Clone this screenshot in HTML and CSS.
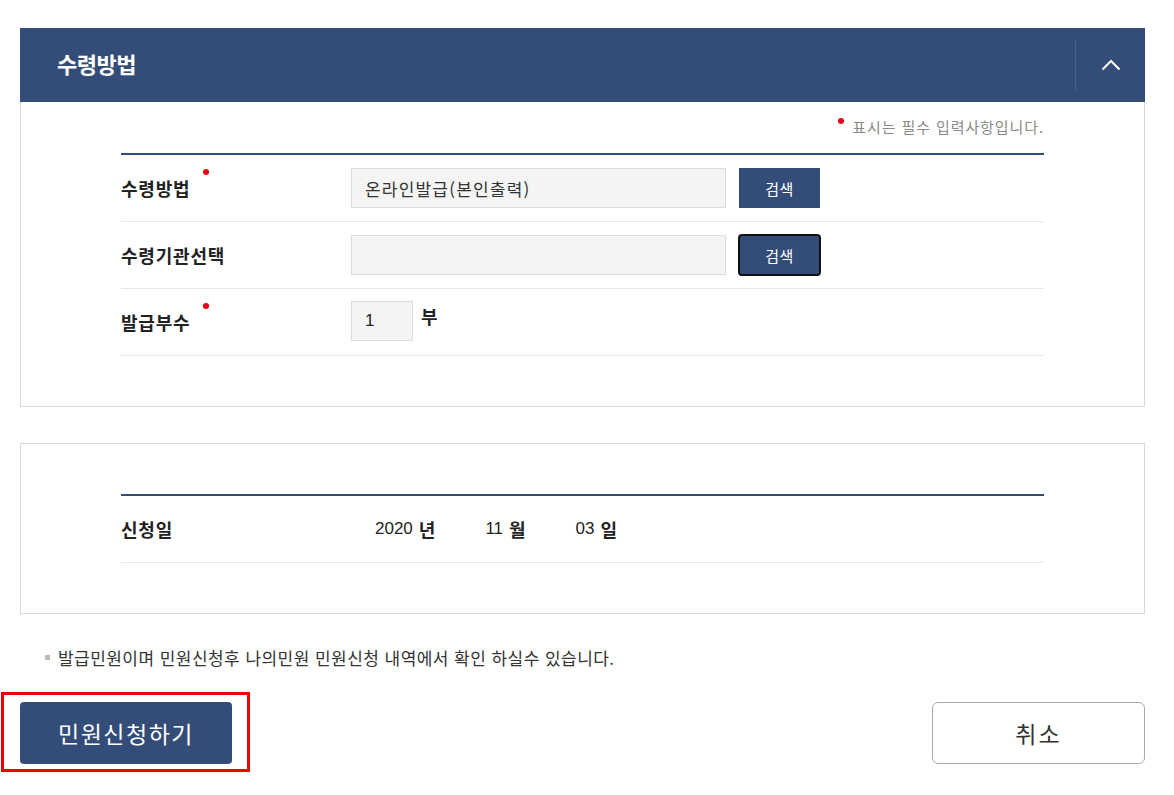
FILE: index.html
```html
<!DOCTYPE html>
<html lang="ko">
<head>
  <meta charset="UTF-8" />
  <meta name="viewport" content="width=device-width, initial-scale=1.0"/>
  <title>수령방법</title>
  <link rel="stylesheet" href="styles.css">
</head>
<body>
  <div class="page">
    <section class="panel">
      <div class="panel-head">
        <h2>수령방법</h2>
        <button class="toggle" type="button" aria-label="접기">
          <svg width="20" height="12" viewBox="0 0 20 12"><path d="M1.5 10.5 L10 2 L18.5 10.5" fill="none" stroke="#fff" stroke-width="2"/></svg>
        </button>
      </div>
      <div class="panel-body">
        <p class="req-note"><span class="dot"></span>표시는 필수 입력사항입니다.</p>
        <div class="form-table">
          <div class="row">
            <div class="label">수령방법<span class="dot"></span></div>
            <div class="field">
              <input class="text-input" type="text" value="온라인발급(본인출력)" readonly>
              <button class="btn-search" type="button">검색</button>
            </div>
          </div>
          <div class="row">
            <div class="label">수령기관선택</div>
            <div class="field">
              <input class="text-input" type="text" value="" readonly>
              <button class="btn-search focused" type="button">검색</button>
            </div>
          </div>
          <div class="row">
            <div class="label">발급부수<span class="dot"></span></div>
            <div class="field top">
              <input class="count-input" type="text" value="1">
              <span class="unit">부</span>
            </div>
          </div>
        </div>
      </div>
    </section>

    <section class="panel plain">
      <div class="form-table">
        <div class="row">
          <div class="label">신청일</div>
          <div class="field date">
            <span class="num">2020</span><span class="unit">년</span>
            <span class="num gap">11</span><span class="unit">월</span>
            <span class="num gap">03</span><span class="unit">일</span>
          </div>
        </div>
      </div>
    </section>

    <p class="info"><span class="bullet"></span>발급민원이며 민원신청후 나의민원 민원신청 내역에서 확인 하실수 있습니다.</p>

    <div class="actions">
      <div class="highlight">
        <button class="btn-submit" type="button">민원신청하기</button>
      </div>
      <button class="btn-cancel" type="button">취소</button>
    </div>
  </div>
</body>
</html>
```

FILE: styles.css
```css
* {
  box-sizing: border-box;
}

body {
  margin: 0;
  background: #fff;
  font-family: "Noto Sans CJK KR", "Noto Sans", sans-serif;
  color: #222;
}

.page {
  width: 1125px;
  margin-left: 20px;
  padding-top: 28px;
}

.panel {
  border: 1px solid #d9d9d9;
}

.panel-head {
  height: 74px;
  margin: -1px -1px 0;
  background: #344d78;
  display: flex;
  align-items: center;
  justify-content: space-between;
  padding-left: 37px;
}

.panel-head h2 {
  margin: 0 0 4px;
  color: #fff;
  font-size: 22px;
  font-weight: 700;
  letter-spacing: -0.5px;
}

.toggle {
  width: 70px;
  height: 50px;
  background: none;
  border: 0;
  border-left: 1px solid #4a6290;
  display: flex;
  align-items: center;
  justify-content: center;
  padding: 0;
}

.panel-body {
  padding: 13px 100px 50px;
}

.req-note {
  margin: 0 0 14px;
  text-align: right;
  font-size: 15px;
  letter-spacing: 0.9px;
  color: #8a8a8a;
  line-height: 24px;
}

.dot {
  display: inline-block;
  width: 6px;
  height: 6px;
  border-radius: 50%;
  background: #e60012;
}

.req-note .dot {
  vertical-align: top;
  margin: 3px 8px 0 0;
}

.label .dot {
  position: relative;
  top: -16px;
  margin-left: 13px;
}

.form-table {
  border-top: 2px solid #344d78;
}

.row {
  display: flex;
  min-height: 67px;
  border-bottom: 1px solid #e6e6e6;
}

.label {
  width: 230px;
  font-size: 18px;
  font-weight: 700;
  color: #222;
  display: flex;
  align-items: center;
  letter-spacing: 0.8px;
}

.field {
  display: flex;
  align-items: center;
  gap: 13px;
}

.field.top {
  align-items: flex-start;
  padding-top: 12px;
  gap: 8px;
}

.text-input {
  width: 375px;
  height: 40px;
  background: #f4f4f4;
  border: 1px solid #dcdcdc;
  font-family: inherit;
  font-size: 17px;
  letter-spacing: 1.2px;
  color: #333;
  padding: 0 13px;
  outline: none;
}

.btn-search {
  width: 81px;
  height: 40px;
  background: #344d78;
  color: #fff;
  border: 0;
  font-family: inherit;
  font-size: 15px;
  letter-spacing: 0.5px;
  cursor: pointer;
}

.btn-search.focused {
  outline: 2px solid #111;
  outline-offset: -1px;
  border-radius: 3px;
}

.count-input {
  width: 62px;
  height: 40px;
  background: #f4f4f4;
  border: 1px solid #dcdcdc;
  font-family: "Liberation Sans", sans-serif;
  font-size: 17px;
  color: #222;
  padding: 0 13px;
  outline: none;
}

.unit {
  font-size: 18px;
  font-weight: 700;
  color: #222;
  line-height: 30px;
}

.panel.plain {
  margin-top: 36px;
  padding: 50px 100px 50px;
}

.field.date {
  gap: 0;
  padding-left: 24px;
}

.num {
  font-family: "Liberation Sans", sans-serif;
  font-size: 17px;
  color: #222;
  margin-right: 6px;
}

.num.gap {
  margin-left: 50px;
}

.info {
  margin: 31px 0 0 25px;
  font-size: 17px;
  color: #333;
  display: flex;
  align-items: center;
  letter-spacing: 0.45px;
}

.bullet {
  width: 5px;
  height: 5px;
  background: #bbb;
  margin-right: 8px;
}

.actions {
  display: flex;
  justify-content: space-between;
  align-items: center;
  margin-top: 22px;
}

.highlight {
  margin-left: -19px;
  border: 3px solid #f20000;
  padding: 7px 15px 5px 16px;
}

.btn-submit {
  width: 212px;
  height: 62px;
  background: #344d78;
  color: #fff;
  border: 0;
  border-radius: 4px;
  font-family: inherit;
  font-size: 23px;
  letter-spacing: 1.5px;
  cursor: pointer;
}

.btn-cancel {
  width: 213px;
  height: 62px;
  background: #fff;
  color: #333;
  border: 1px solid #aaa;
  border-radius: 6px;
  font-family: inherit;
  font-size: 23px;
  letter-spacing: 2px;
  cursor: pointer;
  margin-top: 2px;
}
```
